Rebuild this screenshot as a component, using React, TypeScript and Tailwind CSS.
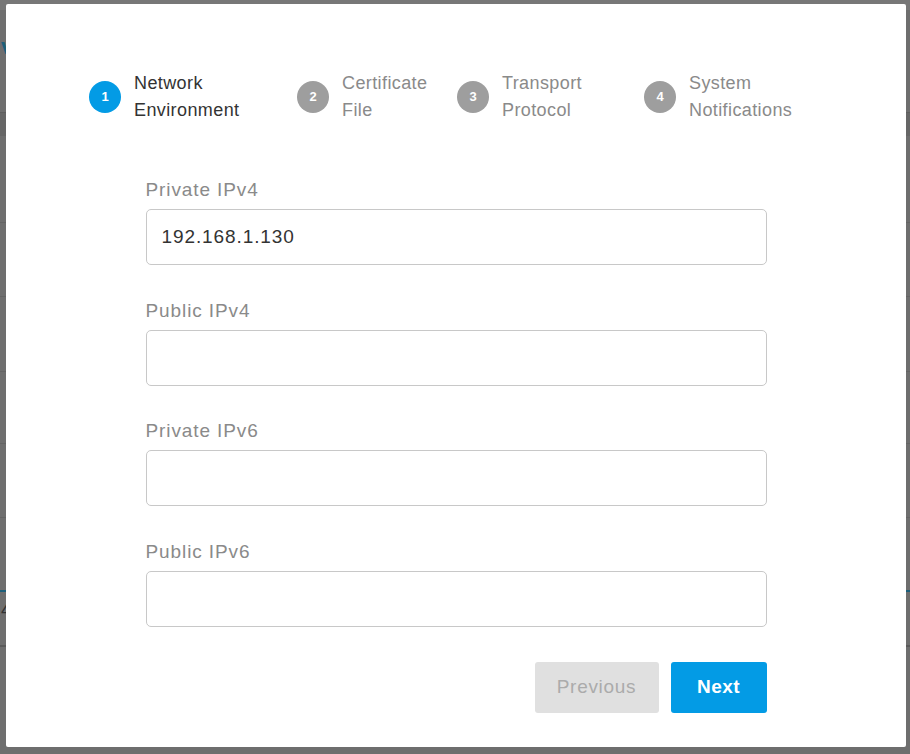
import React from "react";

const steps = [
  { n: 1, l1: "Network", l2: "Environment", active: true, w: "w-[208px]" },
  { n: 2, l1: "Certificate", l2: "File", active: false, w: "w-[160px]" },
  { n: 3, l1: "Transport", l2: "Protocol", active: false, w: "w-[187px]" },
  { n: 4, l1: "System", l2: "Notifications", active: false, w: "w-[200px]" },
];

const fields = [
  { label: "Private IPv4", value: "192.168.1.130" },
  { label: "Public IPv4", value: "" },
  { label: "Private IPv6", value: "" },
  { label: "Public IPv6", value: "" },
];

export default function App() {
  return (
    <div
      className="relative w-[910px] h-[754px] overflow-hidden bg-[#6e6e6e]"
      style={{ fontFamily: '"Liberation Sans", Arial, sans-serif' }}
    >
      {/* background page, dimmed by the overlay */}
      <div className="flex flex-col">
        <div className="h-[10px] bg-[#777777]" />
        <div className="h-[102px] pl-[1px] pt-[24px] text-[22px] leading-[26px] font-bold text-[#1d5f7a]">v</div>
        <div className="h-[24px] bg-[#666666] border-t border-[#5e5e5e]" />
        <div className="h-[87px] border-b border-[#646464]" />
        <div className="h-[74px] border-b border-[#646464]" />
        <div className="h-[75px] border-b border-[#646464]" />
        <div className="h-[72px] border-b border-[#646464]" />
        <div className="h-[74px] border-b border-[#646464]" />
        <div className="h-[74px] border-b-2 border-[#1d5f7a]" />
        <div className="h-[55px] border-b-2 border-[#5a5a5a] pl-[1px] pt-[5px] text-[20px] leading-[24px] text-[#333333]">4</div>
      </div>

      {/* modal */}
      <div className="absolute left-[6px] top-[4px] w-[900px] h-[743px] bg-white rounded-[2px] flex flex-col">
        {/* stepper */}
        <div className="flex pl-[83px] pt-[66px]">
          {steps.map((s) => (
            <div key={s.n} className={`${s.w} flex items-center shrink-0`}>
              <div
                className={`w-[32px] h-[32px] rounded-full flex items-center justify-center text-white text-[13px] font-bold shrink-0 ${
                  s.active ? "bg-[#039be5]" : "bg-[#9e9e9e]"
                }`}
              >
                {s.n}
              </div>
              <div
                className={`ml-[13px] text-[18px] leading-[27px] tracking-[0.4px] ${
                  s.active ? "text-[#333333]" : "text-[#8a8a8a]"
                }`}
              >
                <div>{s.l1}</div>
                <div>{s.l2}</div>
              </div>
            </div>
          ))}
        </div>

        {/* form */}
        <div className="w-[621px] mx-auto mt-[54px] flex flex-col gap-[33.5px]">
          {fields.map((f) => (
            <div key={f.label} className="flex flex-col gap-[7px]">
              <div className="text-[19px] leading-[24px] tracking-[0.9px] text-[#8a8a8a]">{f.label}</div>
              <div className="h-[56px] border border-[#c8c8c8] rounded-[5px] flex items-center px-[15px] text-[19px] tracking-[0.9px] text-[#333333]">
                {f.value}
              </div>
            </div>
          ))}

          <div className="flex justify-end gap-[12px] mt-[1.5px]">
            <button className="w-[124px] h-[51px] rounded-[3px] bg-[#e0e0e0] text-[#ababab] text-[19px] tracking-[0.7px]">
              Previous
            </button>
            <button className="w-[96px] h-[51px] rounded-[3px] bg-[#039be5] text-white text-[19px] font-bold tracking-[0.5px]">
              Next
            </button>
          </div>
        </div>
      </div>
    </div>
  );
}
